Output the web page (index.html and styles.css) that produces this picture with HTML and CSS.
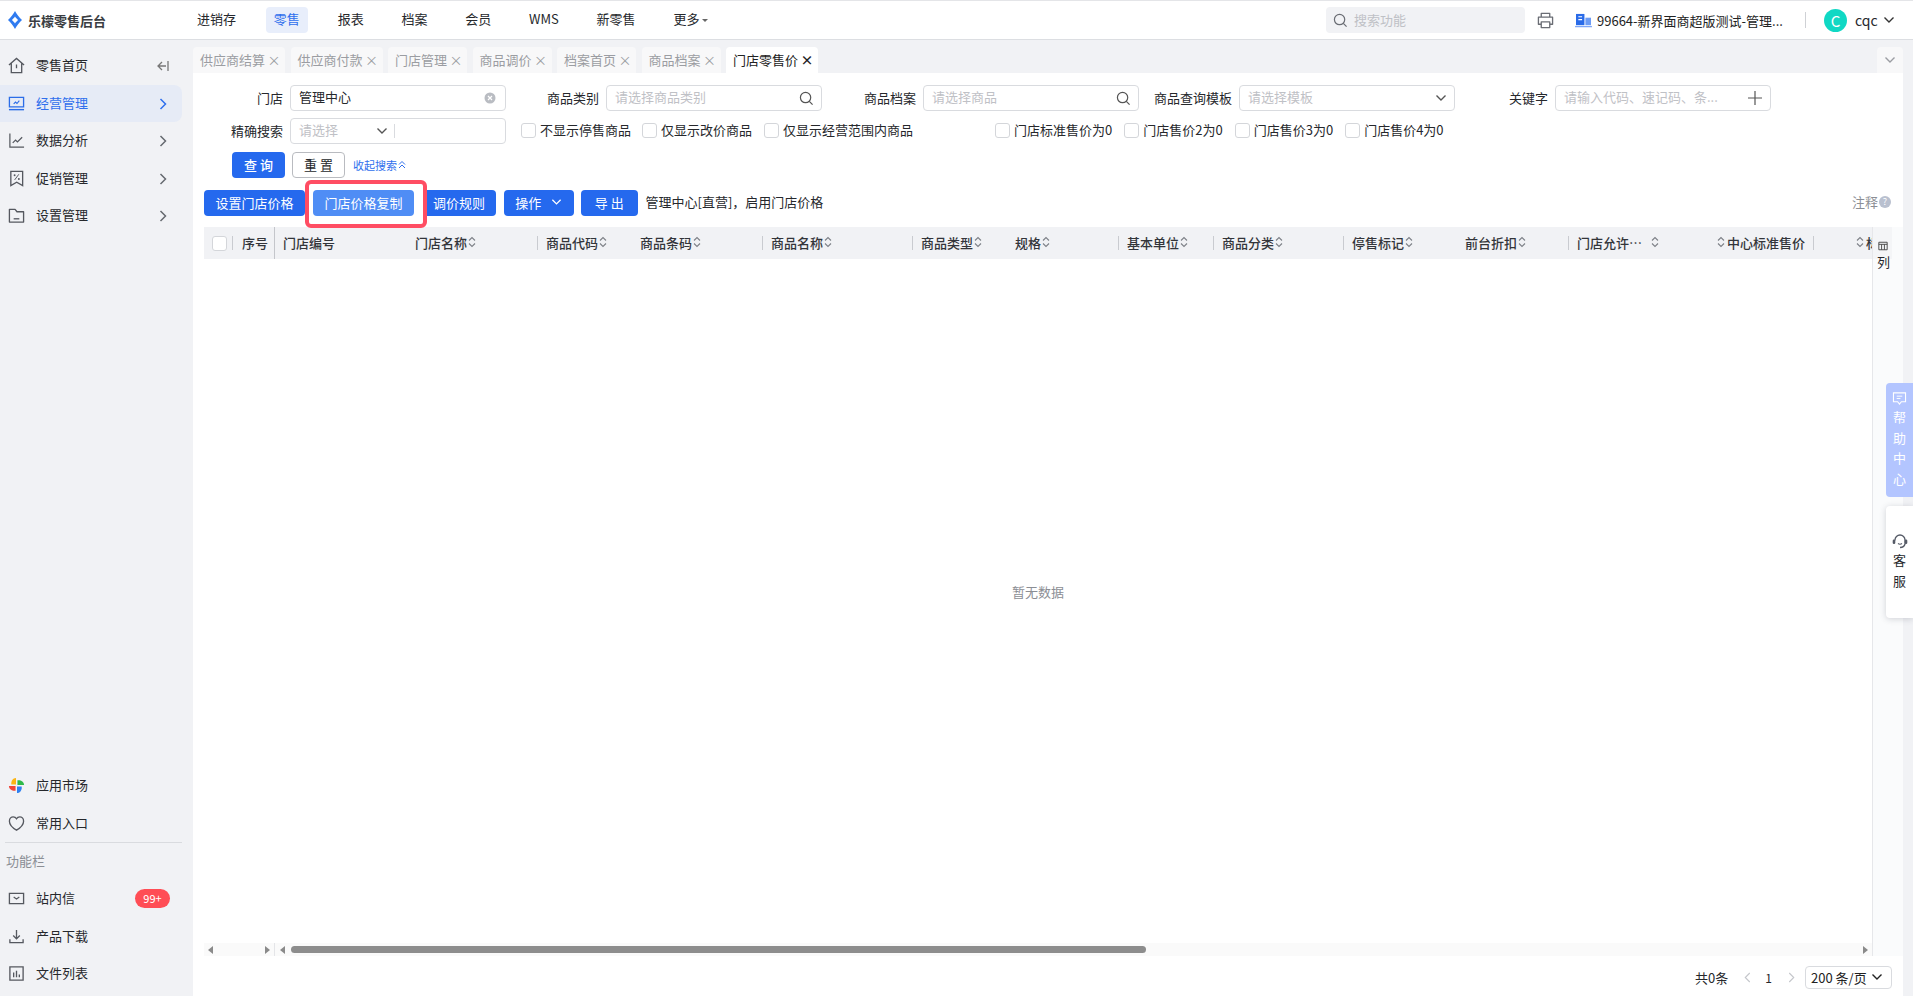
FILE: index.html
```html
<!DOCTYPE html>
<html lang="zh-CN">
<head>
<meta charset="utf-8">
<title>乐檬零售后台</title>
<link rel="stylesheet" href="styles.css">
</head>
<body>
<svg class="defs" width="0" height="0" aria-hidden="true">
  <symbol id="chev-r" viewBox="0 0 10 14"><path d="M2.5 2l5 5-5 5" fill="none" stroke="currentColor" stroke-width="1.5"/></symbol>
  <symbol id="chev-d" viewBox="0 0 12 8"><path d="M1.5 1.5L6 6l4.500-4.500" fill="none" stroke="currentColor" stroke-width="1.400"/></symbol>
  <symbol id="sort" viewBox="0 0 8 12"><path d="M1 4.500L4 1.500l3 3M1 7.500l3 3 3-3" fill="none" stroke="#7d8087" stroke-width="1.100"/></symbol>
  <symbol id="search" viewBox="0 0 16 16"><circle cx="7" cy="7" r="5.500" fill="none" stroke="currentColor" stroke-width="1.300"/><path d="M11 11l3.500 3.500" stroke="currentColor" stroke-width="1.300"/></symbol>
</svg>
<div class="app">
  <header class="topbar">
    <div class="brand">
      <svg class="logo" viewBox="0 0 14 18" width="14" height="18"><path fill-rule="evenodd" d="M7 0C8 2.500 11.500 6.500 14 9c-2.500 2.500-6 6.500-7 9-1-2.500-4.500-6.500-7-9C2.500 6.500 6 2.500 7 0zM7 5.500C6.300 6.800 5 8 3.800 9 5 10 6.300 11.200 7 12.500 7.700 11.200 9 10 10.200 9 9 8 7.700 6.800 7 5.500z" fill="#2f7bf0"/></svg>
      <span class="brand-name">乐檬零售后台</span>
    </div>
    <nav class="nav">
      <a class="nav-item">进销存</a>
      <a class="nav-item is-active">零售</a>
      <a class="nav-item">报表</a>
      <a class="nav-item">档案</a>
      <a class="nav-item">会员</a>
      <a class="nav-item">WMS</a>
      <a class="nav-item">新零售</a>
      <a class="nav-item">更多<i class="caret"></i></a>
    </nav>
    <div class="top-right">
      <div class="top-search">
        <svg class="top-search-icon" width="15" height="15"><use href="#search"/></svg>
        <span>搜索功能</span>
      </div>
      <svg class="printer" viewBox="0 0 18 18" width="17" height="17"><path d="M4.500 5V1.500h9V5M4.500 13H1.500V5.500h15V13h-3M4.500 10.500h9v6h-9z" fill="none" stroke="#6a6d74" stroke-width="1.400" stroke-linejoin="round"/></svg>
      <svg class="org-icon" viewBox="0 0 18 16" width="17" height="15"><path d="M1 1h9v12H1z" fill="#2a6be8"/><path d="M11 5h6v8h-6z" fill="#6d9cf5"/><path d="M3.500 4h4M3.500 7h4" stroke="#fff" stroke-width="1.200"/><path d="M0 14.500h18" stroke="#7ea6f7" stroke-width="1.400"/></svg>
      <span class="org-name">99664-新界面商超版测试-管理...</span>
      <i class="top-sep"></i>
      <span class="avatar">C</span>
      <span class="user">cqc</span>
      <svg class="user-chev" width="12" height="8"><use href="#chev-d"/></svg>
    </div>
  </header>

  <div class="body">
    <aside class="sidebar">
      <ul class="menu">
        <li class="menu-item">
          <svg class="menu-icon" viewBox="0 0 18 18"><path d="M1 8.500L9 1.500l8 7M3.500 7v9.500h11V7M9 8v4" fill="none" stroke="#55585f" stroke-width="1.400"/></svg>
          <span>零售首页</span>
          <svg class="collapse" viewBox="0 0 13 12" width="13" height="12"><path d="M6 2L2 6l4 4M2 6h8M12 1v10" fill="none" stroke="#777" stroke-width="1.300"/></svg>
        </li>
        <li class="menu-item is-active">
          <svg class="menu-icon" viewBox="0 0 18 18"><path d="M1.500 2.500h15v10h-15z" fill="none" stroke="#2b6de8" stroke-width="1.400"/><path d="M1 15.500h16" stroke="#2b6de8" stroke-width="1.500"/><path d="M6 9.500l2-2 1.500 1.500 2.500-3" fill="none" stroke="#2b6de8" stroke-width="1.200"/></svg>
          <span>经营管理</span>
          <svg class="menu-chev" width="10" height="14"><use href="#chev-r"/></svg>
        </li>
        <li class="menu-item">
          <svg class="menu-icon" viewBox="0 0 18 18"><path d="M2 1.500v14.500h15" fill="none" stroke="#55585f" stroke-width="1.300"/><path d="M5 11.500l3-3 2 2 5-5" fill="none" stroke="#55585f" stroke-width="1.300"/></svg>
          <span>数据分析</span>
          <svg class="menu-chev" width="10" height="14"><use href="#chev-r"/></svg>
        </li>
        <li class="menu-item">
          <svg class="menu-icon" viewBox="0 0 18 18"><path d="M3 1.500h12.500v15L9.200 13 3 16.500z" fill="none" stroke="#55585f" stroke-width="1.400"/><path d="M11.500 4.500l-4.500 6" stroke="#55585f"/><circle cx="7" cy="5.500" r="1" fill="#55585f"/><circle cx="11.500" cy="9.500" r="1" fill="#55585f"/></svg>
          <span>促销管理</span>
          <svg class="menu-chev" width="10" height="14"><use href="#chev-r"/></svg>
        </li>
        <li class="menu-item">
          <svg class="menu-icon" viewBox="0 0 18 18"><path d="M1.500 2.500h6l2 2.500h7v11h-15z" fill="none" stroke="#55585f" stroke-width="1.400" stroke-linejoin="round"/><path d="M6 12.500h6" stroke="#55585f" stroke-width="1.400"/></svg>
          <span>设置管理</span>
          <svg class="menu-chev" width="10" height="14"><use href="#chev-r"/></svg>
        </li>
      </ul>
      <ul class="menu menu-bottom">
        <li class="menu-item">
          <svg class="menu-icon" viewBox="0 0 18 18"><path d="M8.500 8V1C5 1 3 4.500 3.500 8z" fill="#fbb514"/><path d="M10 8.500h7C17 5 13.500 3 10 3.500z" fill="#2fb94a"/><path d="M9.500 10v7c3.500 0 5.500-3.500 5-7z" fill="#2f80f0"/><path d="M8 9.500H1C1 13 4.500 15 8 14.500z" fill="#f04438"/></svg>
          <span>应用市场</span>
        </li>
        <li class="menu-item">
          <svg class="menu-icon" viewBox="0 0 18 18"><path d="M9 16S1.500 11.500 1.500 6.500C1.500 3.800 3.500 2 5.500 2 7 2 8.300 2.800 9 4c.7-1.200 2-2 3.500-2 2 0 4 1.800 4 4.500C16.500 11.500 9 16 9 16z" fill="none" stroke="#55585f" stroke-width="1.400"/></svg>
          <span>常用入口</span>
        </li>
      </ul>
      <div class="side-divider"></div>
      <div class="side-title">功能栏</div>
      <ul class="menu">
        <li class="menu-item">
          <svg class="menu-icon" viewBox="0 0 18 18"><path d="M1.500 3.500h15v11h-15z" fill="none" stroke="#55585f" stroke-width="1.400"/><path d="M6 7.500l3 2 3-2" fill="none" stroke="#55585f" stroke-width="1.300"/></svg>
          <span>站内信</span>
          <b class="badge">99+</b>
        </li>
        <li class="menu-item">
          <svg class="menu-icon" viewBox="0 0 18 18"><path d="M9 2v9M5.500 8L9 11.500 12.500 8M2 12v3.500h14V12" fill="none" stroke="#55585f" stroke-width="1.400"/></svg>
          <span>产品下载</span>
        </li>
        <li class="menu-item">
          <svg class="menu-icon" viewBox="0 0 18 18"><path d="M2 2h14v14H2z" fill="none" stroke="#55585f" stroke-width="1.400"/><path d="M6 8v5M9 6v7M12 10v3" stroke="#55585f" stroke-width="1.400"/></svg>
          <span>文件列表</span>
        </li>
      </ul>
    </aside>

    <main class="main">
      <div class="tabs">
        <div class="tab">供应商结算<i class="tab-x">×</i></div>
        <div class="tab">供应商付款<i class="tab-x">×</i></div>
        <div class="tab">门店管理<i class="tab-x">×</i></div>
        <div class="tab">商品调价<i class="tab-x">×</i></div>
        <div class="tab">档案首页<i class="tab-x">×</i></div>
        <div class="tab">商品档案<i class="tab-x">×</i></div>
        <div class="tab is-active">门店零售价<i class="tab-x">×</i></div>
        <div class="tabs-more"><svg width="12" height="8"><use href="#chev-d"/></svg></div>
      </div>

      <div class="content">
        <form class="filters">
          <div class="filter-row">
            <div class="field"><label>门店</label>
              <div class="input has-value">管理中心
                <svg class="clear" viewBox="0 0 12 12" width="12" height="12"><circle cx="6" cy="6" r="5.500" fill="#b9bcc2"/><path d="M4 4l4 4M8 4l-4 4" stroke="#fff" stroke-width="1.200"/></svg>
              </div>
            </div>
            <div class="field"><label>商品类别</label>
              <div class="input">请选择商品类别<svg class="input-icon" width="15" height="15"><use href="#search"/></svg></div>
            </div>
            <div class="field"><label>商品档案</label>
              <div class="input">请选择商品<svg class="input-icon" width="15" height="15"><use href="#search"/></svg></div>
            </div>
            <div class="field"><label>商品查询模板</label>
              <div class="input">请选择模板<svg class="input-chev" width="12" height="8"><use href="#chev-d"/></svg></div>
            </div>
            <div class="field"><label>关键字</label>
              <div class="input">请输入代码、速记码、条...
                <svg class="input-plus" viewBox="0 0 14 14" width="14" height="14"><path d="M7 0v14M0 7h14" stroke="#555" stroke-width="1.200"/></svg>
              </div>
            </div>
          </div>
          <div class="filter-row row-two">
            <div class="field"><label>精确搜索</label>
              <div class="input combo"><span class="combo-select">请选择<svg class="combo-chev" width="12" height="8"><use href="#chev-d"/></svg></span><i class="combo-sep"></i></div>
            </div>
            <div class="checks">
              <label class="check"><i class="box"></i>不显示停售商品</label>
              <label class="check"><i class="box"></i>仅显示改价商品</label>
              <label class="check check-third"><i class="box"></i>仅显示经营范围内商品</label>
              <label class="check check-far"><i class="box"></i>门店标准售价为0</label>
              <label class="check check-price"><i class="box"></i>门店售价2为0</label>
              <label class="check check-price"><i class="box"></i>门店售价3为0</label>
              <label class="check check-price"><i class="box"></i>门店售价4为0</label>
            </div>
          </div>
          <div class="filter-actions">
            <button type="button" class="btn btn-query">查 询</button>
            <button type="button" class="btn btn-reset">重 置</button>
            <a class="fold">收起搜索<svg viewBox="0 0 8 10" width="8" height="10"><path d="M1 4.500L4 1.500l3 3M1 8l3-3 3 3" fill="none" stroke="#2f6fed" stroke-width="1"/></svg></a>
          </div>
        </form>

        <div class="toolbar">
          <button type="button" class="btn btn-wide">设置门店价格</button>
          <div class="highlight"><button type="button" class="btn btn-wide btn-light">门店价格复制</button></div>
          <button type="button" class="btn btn-rule">调价规则</button>
          <button type="button" class="btn btn-op">操作<svg width="11" height="8"><use href="#chev-d"/></svg></button>
          <button type="button" class="btn btn-export">导 出</button>
          <span class="store-hint">管理中心[直营]，启用门店价格</span>
          <span class="note">注释<i class="help-dot">?</i></span>
        </div>

        <section class="table">
          <div class="thead">
            <div class="th th-check"><i class="box"></i></div>
            <div class="th th-seq">序号</div>
            <div class="th">门店编号</div>
            <div class="th sep">门店名称<svg class="sort" width="8" height="12"><use href="#sort"/></svg></div>
            <div class="th">商品代码<svg class="sort" width="8" height="12"><use href="#sort"/></svg></div>
            <div class="th sep">商品条码<svg class="sort" width="8" height="12"><use href="#sort"/></svg></div>
            <div class="th sep">商品名称<svg class="sort" width="8" height="12"><use href="#sort"/></svg></div>
            <div class="th">商品类型<svg class="sort" width="8" height="12"><use href="#sort"/></svg></div>
            <div class="th sep">规格<svg class="sort" width="8" height="12"><use href="#sort"/></svg></div>
            <div class="th sep">基本单位<svg class="sort" width="8" height="12"><use href="#sort"/></svg></div>
            <div class="th sep">商品分类<svg class="sort" width="8" height="12"><use href="#sort"/></svg></div>
            <div class="th">停售标记<svg class="sort" width="8" height="12"><use href="#sort"/></svg></div>
            <div class="th sep">前台折扣<svg class="sort" width="8" height="12"><use href="#sort"/></svg></div>
            <div class="th th-allow">门店允许…<svg class="sort sort-far" width="8" height="12"><use href="#sort"/></svg></div>
            <div class="th th-right sep"><svg class="sort" width="8" height="12"><use href="#sort"/></svg>中心标准售价</div>
            <div class="th th-last"><svg class="sort" width="8" height="12"><use href="#sort"/></svg>标准</div>
          </div>
          <div class="empty">暂无数据</div>
          <div class="hscroll">
            <div class="hscroll-frozen"><i class="arrow-l"></i><i class="arrow-r"></i></div>
            <div class="hscroll-track"><i class="arrow-l"></i><div class="thumb"></div><i class="arrow-r"></i></div>
          </div>
          <aside class="col-strip">
            <svg viewBox="0 0 12 12" width="10" height="10"><path d="M1 1.500h10v9H1zM1 4h10M4.300 4v6.500M7.700 4v6.500" fill="none" stroke="#444" stroke-width="1.100"/></svg>
            <span>列</span>
          </aside>
        </section>

        <footer class="pager">
          <span>共0条</span>
          <svg class="pager-prev" viewBox="0 0 10 14" width="9" height="13"><path d="M7.500 2l-5 5 5 5" fill="none" stroke="#c4c6cb" stroke-width="1.200"/></svg>
          <span class="pager-num">1</span>
          <svg class="pager-next" viewBox="0 0 10 14" width="9" height="13"><path d="M2.500 2l5 5-5 5" fill="none" stroke="#c4c6cb" stroke-width="1.200"/></svg>
          <div class="page-size">200 条/页<svg width="12" height="8"><use href="#chev-d"/></svg></div>
        </footer>
      </div>
    </main>
  </div>

  <div class="help-tab">
    <svg viewBox="0 0 16 14" width="15" height="13"><path d="M1.500 1h13v9.500H10L8 13 6 10.500H1.500z" fill="none" stroke="#fff" stroke-width="1.200"/><path d="M5 4.500h6M5 7h4" stroke="#fff"/></svg>
    <span>帮</span><span>助</span><span>中</span><span>心</span>
  </div>
  <div class="service-tab">
    <svg viewBox="0 0 16 16" width="16" height="16"><path d="M3 7.500V7a5 5 0 0 1 10 0v4c-.5 2-2.500 3.500-5 3.500" fill="none" stroke="#555a66" stroke-width="1.300"/><rect x="0.700" y="6.500" width="2.600" height="4.500" rx="1.200" fill="#555a66"/><rect x="12.700" y="6.500" width="2.600" height="4.500" rx="1.200" fill="#555a66"/><path d="M6 10.500c1 .7 3 .7 4 0" fill="none" stroke="#555a66" stroke-width="1.100"/></svg>
    <span>客</span><span>服</span>
  </div>
</div>
</body>
</html>
```

FILE: styles.css
```css
* { box-sizing: border-box; }
html, body { margin: 0; height: 100%; }
body {
  font-family: "Noto Sans CJK SC", "Noto Sans", sans-serif;
  font-size: 13px;
  color: #26282c;
  background: #fff;
  overflow: hidden;
}
ul { list-style: none; margin: 0; padding: 0; }
i { font-style: normal; }
button { font: inherit; cursor: pointer; }
.defs { position: absolute; }

.app { position: relative; width: 1913px; height: 996px; display: flex; flex-direction: column; }

/* top bar */
.topbar {
  flex: none; height: 40px; display: flex; align-items: center;
  border-top: 1px solid #e4e5e8; border-bottom: 1px solid #dcdee2; background: #fff;
}
.brand { flex: none; width: 189px; padding-left: 8px; display: flex; align-items: center; gap: 6px; }
.brand-name { font-weight: 700; color: #3a3d42; letter-spacing: 0; }
.nav { display: flex; gap: 21.800px; }
.nav-item { display: block; height: 26px; line-height: 24px; padding: 0 8px; border-radius: 4px; white-space: nowrap; }
.nav-item.is-active { background: #e8eefb; color: #2f6fed; }
.caret {
  display: inline-block; margin-left: 3px; vertical-align: middle;
  border-left: 3px solid transparent; border-right: 3px solid transparent; border-top: 3px solid #666;
}
.top-right { margin-left: auto; display: flex; align-items: center; height: 100%; }
.top-search {
  width: 199px; height: 26px; background: #f1f2f5; border-radius: 4px; color: #bfc1c6;
  display: flex; align-items: center; padding-left: 7px; gap: 6px;
}
.top-search span { padding-bottom: 2px; }
.top-search-icon { color: #6a6d74; }
.printer { margin-left: 12px; }
.org-icon { margin-left: 21px; }
.org-name { margin-left: 5px; width: 187px; white-space: nowrap; color: #222; }
.top-sep { width: 1px; height: 16px; background: #cfd1d5; margin-left: 21px; }
.avatar {
  margin-left: 18px; width: 23px; height: 23px; border-radius: 50%; background: #10d8c4; color: #fff;
  font-size: 15px; text-align: center; line-height: 23px;
}
.user { margin-left: 8px; width: 28px; font-size: 14px; }
.user-chev { margin-right: 18px; color: #333; }

/* layout */
.body { flex: 1; display: flex; min-height: 0; }
.sidebar { flex: none; width: 193px; background: #f1f2f5; padding-top: 7px; display: flex; flex-direction: column; }
.menu-item {
  position: relative; width: 182px; height: 37.500px; display: flex; align-items: center; padding-left: 8px; gap: 11px;
  border-radius: 0 8px 8px 0; color: #26282c;
}
.menu-item > span { padding-bottom: 2px; }
.menu-item.is-active { background: #e6ebf6; color: #2f6fed; }
.menu-icon { width: 17px; height: 17px; flex: none; }
.menu-chev { position: absolute; left: 158px; top: 12px; color: #666a70; }
.is-active .menu-chev { color: #2f6fed; }
.collapse { position: absolute; left: 156px; top: 13px; }
.menu-bottom { margin-top: auto; }
.side-divider { width: 177px; height: 1px; background: #d9dbdf; margin: 0 0 0 5px; flex: none; }
.side-title { height: 37px; line-height: 36px; padding-left: 6px; color: #8b8e94; flex: none; }
.sidebar > .menu:last-child { margin-bottom: 3.500px; }
.badge {
  position: absolute; left: 135px; top: 9px; width: 35px; height: 19px; border-radius: 10px; background: #ff4d55; color: #fff;
  font-size: 11px; font-weight: 400; line-height: 19px; text-align: center;
}

/* tabs */
.main { flex: 1; min-width: 0; display: flex; flex-direction: column; background: #f1f2f5; padding-right: 10px; }
.tabs { flex: none; height: 33px; padding-top: 7px; display: flex; gap: 5.500px; background: #f1f2f5; }
.tab {
  height: 26px; padding: 0 7px 2px; display: flex; align-items: center; background: #f8f8f9; color: #9b9da2;
  border-radius: 4px 4px 0 0; white-space: nowrap;
}
.tab-x { margin: 0 1.500px 0 2.500px; width: 9px; font-size: 13px; line-height: 1; text-align: center; color: #9b9da2; }
.tab.is-active { background: #fff; color: #222; }
.tab.is-active .tab-x { color: #222; font-weight: 700; }
.tabs-more {
  margin-left: auto; width: 26px; height: 26px; background: #f8f8f9; color: #9b9da2;
  border-radius: 4px 4px 0 0; display: flex; align-items: center; justify-content: center;
}

/* content */
.content { flex: 1; min-height: 0; background: #fff; display: flex; flex-direction: column; }
.filters { flex: none; padding-top: 12px; }
.filter-row { display: grid; grid-template-columns: 313px 316px 317px 316px 316px; height: 26px; }
.row-two { display: flex; margin-top: 7px; }
.row-two .field { width: 313px; flex: none; }
.field { display: flex; justify-content: flex-end; align-items: center; gap: 7px; }
.field label { white-space: nowrap; padding-bottom: 1px; }
.input {
  position: relative; flex: none; width: 216px; height: 26px; border: 1px solid #d9dbdf; border-radius: 4px;
  padding-left: 8px; line-height: 21px; color: #bfc1c6; white-space: nowrap;
}
.input.has-value { color: #26282c; }
.clear { position: absolute; right: 9px; top: 6px; }
.input-icon { position: absolute; right: 7px; top: 5px; color: #555; }
.input-chev { position: absolute; right: 7px; top: 8px; color: #555; }
.input-plus { position: absolute; right: 8px; top: 5px; }
.combo { display: flex; align-items: center; }
.combo-select { width: 95px; position: relative; padding-bottom: 2px; line-height: 20px; }
.combo-chev { position: absolute; right: 6px; top: 7px; color: #555; }
.combo-sep { width: 1px; height: 14px; background: #d9dbdf; }
.checks { margin-left: 15px; display: flex; align-items: center; gap: 11px; }
.check { display: flex; align-items: center; gap: 4px; white-space: nowrap; line-height: 20px; padding-bottom: 2px; }
.check-third { margin-left: 1px; }
.check-far { margin-left: 71px; }
.check-price { margin-left: 1px; }
.box { display: block; width: 15px; height: 15px; border: 1px solid #d4d6da; border-radius: 3px; background: #fff; flex: none; }
.filter-actions { display: flex; align-items: center; margin-top: 8px; padding-left: 39px; height: 26px; }
.btn {
  height: 26px; padding: 0 0 2px; border: 0; border-radius: 4px; background: #2569ee; color: #fff; white-space: nowrap;
}
.btn-query { width: 53px; font-weight: 500; }
.btn-reset { width: 53px; margin-left: 7px; background: #fff; border: 1px solid #b9bbc0; color: #26282c; }
.fold { margin-left: 8px; color: #2f6fed; font-size: 11px; display: flex; align-items: center; gap: 1px; }

.toolbar { flex: none; position: relative; margin-top: 12px; height: 26px; padding: 0 12px 0 11px; display: flex; align-items: center; gap: 8px; }
.btn-wide { width: 101px; }
.btn-light { background: #4f8df5; position: relative; display: block; }
.highlight { position: relative; z-index: 1; }
.highlight::before {
  content: ""; position: absolute; z-index: -1; left: -8.500px; right: -12.500px; top: -10px; bottom: -12px;
  background: #fff; border: 4px solid #ff4d63; border-radius: 6px;
}
.btn-rule { width: 74px; }
.btn-op { width: 69.500px; display: flex; align-items: center; justify-content: center; gap: 10px; }
.btn-export { width: 56.500px; margin-left: -.5px; }
.store-hint { color: #26282c; padding-bottom: 3px; }
.note { margin-left: auto; color: #8b8e94; display: flex; align-items: center; gap: 1px; padding-bottom: 3px; }
.help-dot {
  width: 12px; height: 12px; border-radius: 50%; background: #b9c0cf; color: #fff; font-size: 9px; line-height: 12px; text-align: center;
}

/* table */
.table { position: relative; flex: 1; min-height: 0; margin: 11px 12px 0 11px; display: flex; flex-direction: column; }
.thead {
  flex: none; height: 32px; width: 1668px; background: #f1f2f5; overflow: hidden;
  display: grid; align-items: center;
  grid-template-columns: 29px 42px 132px 131px 94px 131px 150px 94px 112px 95px 130px 113px 112px 110px 135px 58px;
}
.th { position: relative; height: 100%; display: flex; align-items: center; padding: 0 0 2px 8px; font-weight: 500; color: #33353a; white-space: nowrap; }
.th.sep::after, .th-check::after {
  content: ""; position: absolute; right: 0; top: 9px; width: 1px; height: 14px; background: #c9cbd0;
}
.th-check { padding: 0 0 0 8px; }
.th-seq { padding-left: 9px; border-right: 1px solid #c4c6cb; }
.sort { margin-left: 1px; flex: none; }
.sort-far { margin-left: 9px; }
.th-right { padding-left: 38px; }
.th-right .sort, .th-last .sort { margin: 0 2px 0 0; }
.th-last { padding-left: 42px; overflow: hidden; }
.empty { flex: 1; display: flex; align-items: center; justify-content: center; width: 1668px; padding-bottom: 20px; color: #8b8e94; }
.hscroll { flex: none; height: 13px; width: 1668px; display: flex; background: #fafafa; }
.hscroll-frozen { width: 71px; flex: none; display: flex; justify-content: space-between; align-items: center; padding: 0 4px; border-right: 1px solid #e4e5e8; }
.hscroll-track { flex: 1; display: flex; align-items: center; padding: 0 4px 0 5px; }
.arrow-l, .arrow-r { display: block; width: 0; height: 0; border-top: 4.500px solid transparent; border-bottom: 4.500px solid transparent; flex: none; }
.arrow-l { border-right: 5px solid #8a8a8a; }
.arrow-r { border-left: 5px solid #8a8a8a; }
.hscroll-track .arrow-r { margin-left: auto; }
.thumb { margin-left: 6px; width: 855px; height: 7px; border-radius: 4px; background: #8d8d8d; }
.col-strip {
  position: absolute; left: 1668px; top: 0; bottom: 0; width: 31px; background: #fafbfc; border-left: 1px solid #e6e7ea;
  display: flex; flex-direction: column; padding: 14px 0 0 5px; gap: 1px;
}
.col-strip::before { content: ""; position: absolute; left: 0; top: 0; width: 19px; height: 32px; background: #f4f5f7; }
.col-strip svg, .col-strip span { position: relative; }
.col-strip span { margin: 1px 0 0 -1px; line-height: 18px; }

/* pager */
.pager { flex: none; height: 40px; display: flex; align-items: center; justify-content: flex-end; padding: 2px 11px 0 0; }
.pager-prev { margin-left: 15px; }
.pager-num { margin-left: 13px; font-size: 12px; }
.pager-next { margin-left: 15px; }
.page-size {
  margin-left: 9px; width: 87px; height: 23px; border: 1px solid #d9dbdf; border-radius: 4px; padding-left: 5px;
  display: flex; align-items: center; justify-content: space-between; padding-right: 8px; color: #222; white-space: nowrap;
}

/* floating side tabs */
.help-tab, .service-tab {
  position: absolute; left: 1886px; width: 27px; display: flex; flex-direction: column; align-items: center;
  border-radius: 4px 0 0 4px;
}
.help-tab { top: 383px; height: 114px; padding-top: 9px; background: #b3c5ff; color: #fff; line-height: 20.500px; }
.help-tab svg { margin-bottom: 2px; }
.service-tab { top: 506px; height: 112px; padding-top: 27px; background: #fff; box-shadow: 0 1px 6px rgba(60, 65, 80, .22); line-height: 21px; color: #26282c; }
```
